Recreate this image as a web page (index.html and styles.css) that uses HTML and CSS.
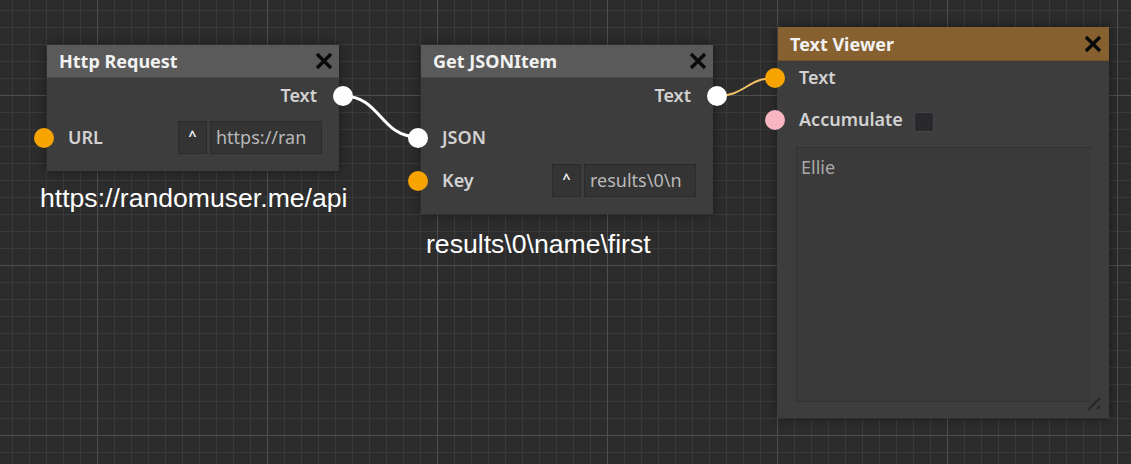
FILE: index.html
```html
<!DOCTYPE html>
<html>
<head>
<meta charset="utf-8">
<link rel="stylesheet" href="styles.css">
</head>
<body>
<div class="canvas">
  <svg class="wires" width="1131" height="464" viewBox="0 0 1131 464">
    <path d="M343 96 C 381 96, 380 137, 418 137" class="wire wire-white"/>
    <path d="M717 96 C 745 96, 747 78, 775 78" class="wire wire-orange"/>
  </svg>

  <div class="node node-http">
    <div class="node-head">
      <span class="node-title">Http Request</span>
      <svg class="close" width="20" height="20" viewBox="0 0 20 20"><path d="M3 3 L17 17 M17 3 L3 17"/></svg>
    </div>
    <div class="node-body">
      <div class="row row-out"><span class="label">Text</span><span class="pin pin-out pin-white"></span></div>
      <div class="row row-in">
        <span class="pin pin-in pin-orange"></span>
        <span class="label">URL</span>
        <div class="field"><span class="caret">^</span><span class="value">https://ran</span></div>
      </div>
    </div>
  </div>

  <div class="node node-json">
    <div class="node-head">
      <span class="node-title">Get JSONItem</span>
      <svg class="close" width="20" height="20" viewBox="0 0 20 20"><path d="M3 3 L17 17 M17 3 L3 17"/></svg>
    </div>
    <div class="node-body">
      <div class="row row-out"><span class="label">Text</span><span class="pin pin-out pin-white"></span></div>
      <div class="row row-in">
        <span class="pin pin-in pin-white"></span>
        <span class="label">JSON</span>
      </div>
      <div class="row row-in row-gap">
        <span class="pin pin-in pin-orange"></span>
        <span class="label">Key</span>
        <div class="field"><span class="caret">^</span><span class="value">results\0\n</span></div>
      </div>
    </div>
  </div>

  <div class="node node-viewer">
    <div class="node-head head-orange">
      <span class="node-title">Text Viewer</span>
      <svg class="close" width="20" height="20" viewBox="0 0 20 20"><path d="M3 3 L17 17 M17 3 L3 17"/></svg>
    </div>
    <div class="node-body viewer-body">
      <div class="row row-small"><span class="pin pin-in pin-orange"></span><span class="label">Text</span></div>
      <div class="row row-small row-acc"><span class="pin pin-in pin-pink"></span><span class="label">Accumulate</span><span class="checkbox"></span></div>
      <div class="textarea">Ellie</div>
    </div>
    <svg class="grip" width="16" height="16" viewBox="0 0 16 16"><path d="M1 14 L13 2 M10 13 L13 10"/></svg>
  </div>

  <div class="note note-url">https://randomuser.me/api</div>
  <div class="note note-key">results\0\name\first</div>
</div>
</body>
</html>
```
FILE: styles.css
```css
html, body {
  margin: 0;
  padding: 0;
  width: 1131px;
  height: 464px;
  overflow: hidden;
}

.canvas {
  position: relative;
  width: 1131px;
  height: 464px;
  background-color: #2c2c2c;
  background-image:
    linear-gradient(to right, #4e4e4e 1px, transparent 1px),
    linear-gradient(to bottom, #4e4e4e 1px, transparent 1px),
    linear-gradient(to right, #3a3a3a 1px, transparent 1px),
    linear-gradient(to bottom, #3a3a3a 1px, transparent 1px);
  background-size: 170px 170px, 170px 170px, 17px 17px, 17px 17px;
  background-position: 97px 0, 0 95px, 12px 0, 0 10px;
  font-family: "Noto Sans", "DejaVu Sans", sans-serif;
}

.wires {
  position: absolute;
  left: 0;
  top: 0;
  pointer-events: none;
}
.wire { fill: none; }
.wire-white { stroke: #ffffff; stroke-width: 3; }
.wire-orange { stroke: #f2c165; stroke-width: 2; }

.node {
  position: absolute;
  background: #3d3d3d;
  box-shadow: 0 0 10px rgba(0, 0, 0, 0.45);
}
.node-http { left: 47px; top: 45px; width: 292px; }
.node-json { left: 421px; top: 45px; width: 292px; }
.node-viewer { left: 778px; top: 27px; width: 331px; }

.node-head {
  height: 33px;
  background: #5a5a5a;
  border-bottom: 1px solid #4a4a4a;
  box-sizing: border-box;
  display: flex;
  align-items: center;
  justify-content: space-between;
  padding: 0 5px 0 12px;
}
.head-orange {
  height: 34px;
  background: #86602f;
  border-bottom: 1px solid #6e4f28;
  padding-right: 6px;
}
.node-title {
  color: #f2f2f2;
  font-size: 18px;
  font-weight: 700;
  line-height: 18px;
}
.close {
  display: block;
  stroke: #0a0a0a;
  stroke-width: 3.4;
  fill: none;
}

.node-body {
  padding: 6px 0 17px;
  display: flex;
  flex-direction: column;
}
.row {
  position: relative;
  display: flex;
  align-items: center;
  padding: 0 17px 0 21px;
}
.row-out {
  height: 24px;
  justify-content: flex-end;
  padding-right: 22px;
  margin-bottom: 13px;
}
.row-in { height: 33px; }
.row-gap { margin-top: 10px; }

.label {
  color: #d2d2d2;
  font-size: 18px;
  font-weight: 600;
  line-height: 18px;
  padding-bottom: 2px;
}

.pin {
  position: absolute;
  top: 50%;
  width: 20px;
  height: 20px;
  margin-top: -10px;
  border-radius: 50%;
}
.pin-in { left: -13px; }
.pin-out { right: -14px; }
.pin-white { background: #ffffff; }
.pin-orange { background: #f7a400; }
.pin-pink { background: #f7b6c2; }

.field {
  margin-left: auto;
  display: flex;
  gap: 3px;
  height: 33px;
}
.caret, .value {
  box-sizing: border-box;
  height: 33px;
  background: #343434;
  border: 1px solid #2b2b2b;
}
.caret {
  width: 29px;
  color: #f0f0f0;
  font-size: 14px;
  font-weight: 700;
  display: flex;
  align-items: center;
  justify-content: center;
  padding-bottom: 4px;
}
.value {
  width: 112px;
  color: #b8b8b8;
  font-size: 18px;
  line-height: 31px;
  padding-left: 5px;
  overflow: hidden;
  white-space: nowrap;
}

.viewer-body {
  padding: 5px 0 16px;
}
.row-small { height: 24px; }
.row-acc { margin-top: 18px; }
.checkbox {
  width: 20px;
  height: 20px;
  margin-left: 11px;
  margin-top: 3px;
  box-sizing: border-box;
  background: #29292d;
  border: 1px solid #454545;
  border-radius: 3px;
}
.textarea {
  margin: 15px 17px 0 18px;
  height: 255px;
  box-sizing: border-box;
  background: #3a3a3a;
  border: 1px solid #323232;
  border-right-color: #3d3d3d;
  border-bottom-color: #333333;
  color: #a9a9a9;
  font-size: 18px;
  line-height: 38px;
  padding-left: 4px;
}

.grip {
  position: absolute;
  right: 6px;
  bottom: 6px;
  stroke: #262626;
  stroke-width: 2;
  fill: none;
}

.note {
  position: absolute;
  color: #ffffff;
  font-family: "Liberation Sans", Arial, sans-serif;
  font-size: 26.6px;
  line-height: 26px;
  white-space: nowrap;
}
.note-url { left: 40px; top: 185px; }
.note-key { left: 426px; top: 231px; }
```
